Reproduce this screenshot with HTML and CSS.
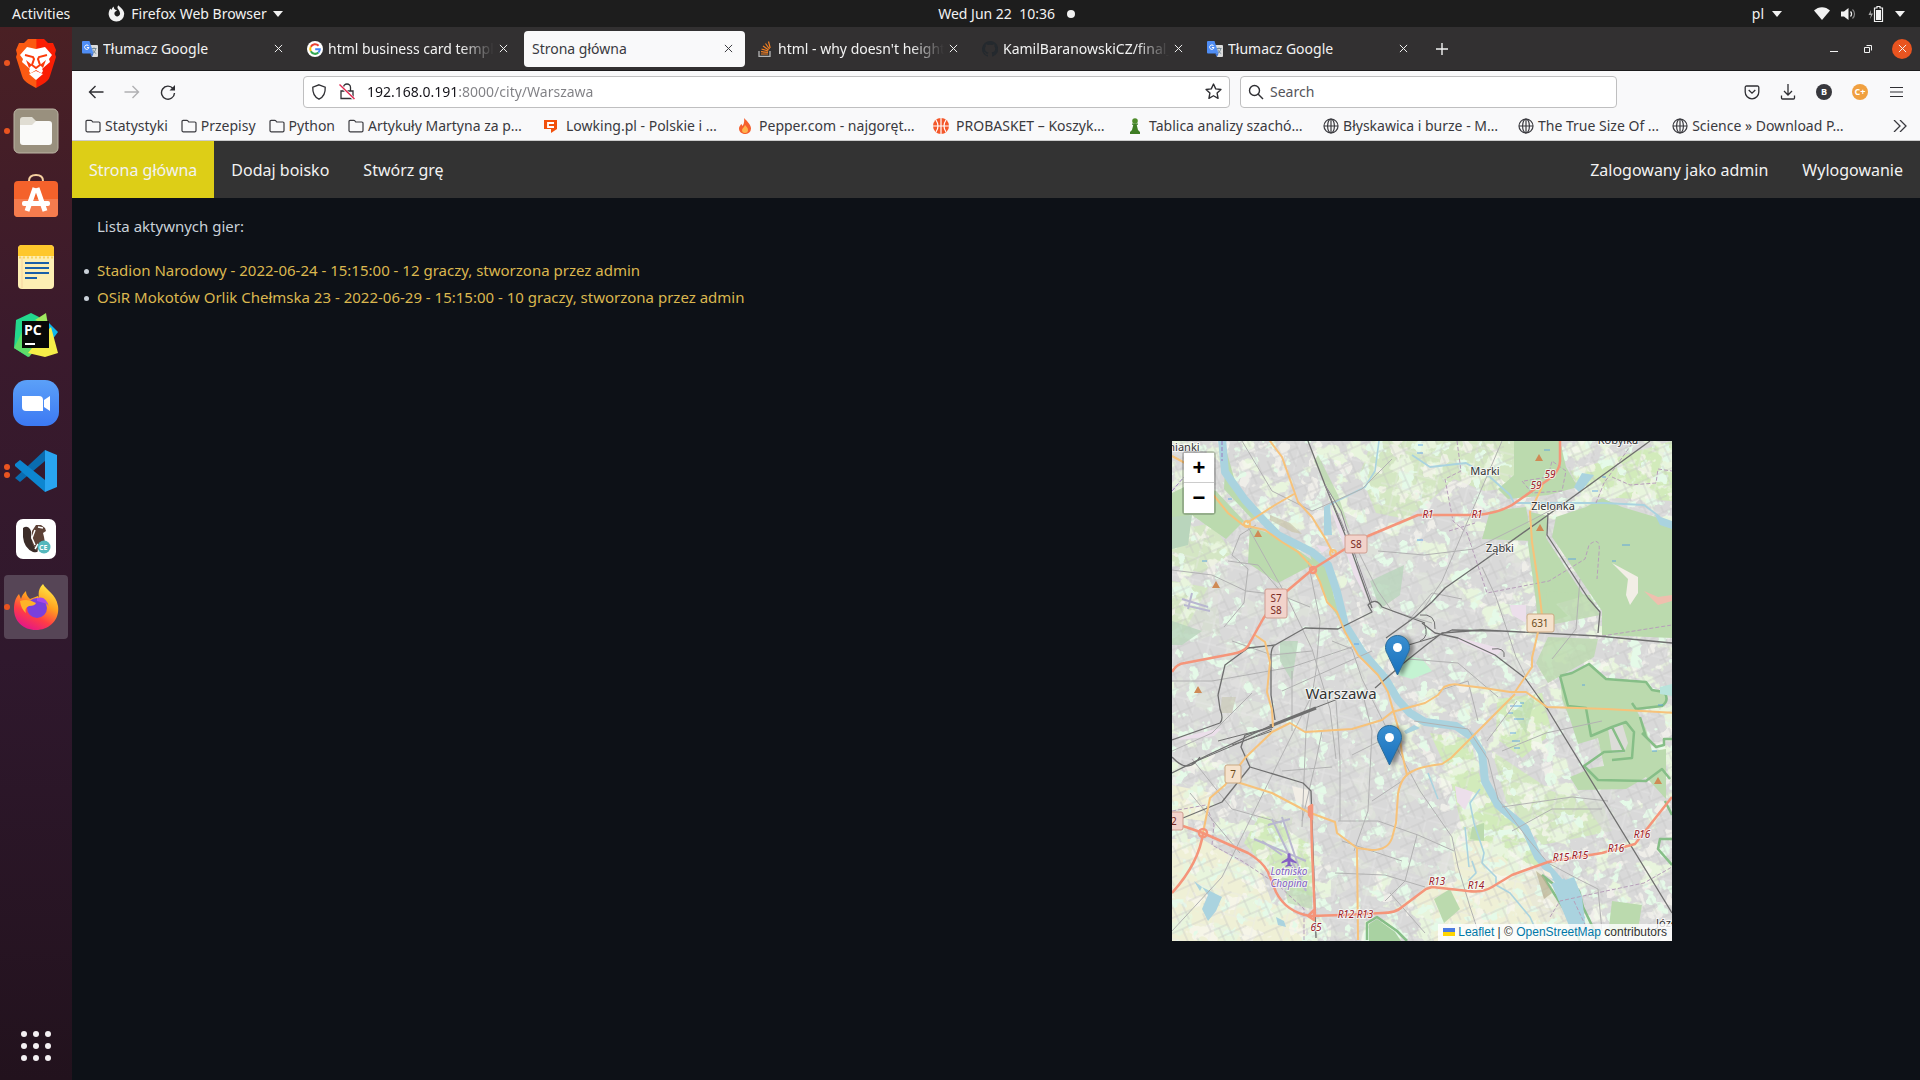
FILE: index.html
```html
<!DOCTYPE html>
<html lang="pl">
<head>
<meta charset="utf-8">
<meta name="viewport" content="width=device-width, initial-scale=1">
<title>Strona główna</title>
<link rel="stylesheet" href="styles.css">
</head>
<body>
<svg class="defs" width="0" height="0" aria-hidden="true">
  <symbol id="i-close" viewBox="0 0 10 10"><path d="M1 1l8 8M9 1L1 9" fill="none" stroke="currentColor" stroke-width="1.1"/></symbol>
  <symbol id="i-caret" viewBox="0 0 10 6"><path d="M0 0h10L5 6z" fill="currentColor"/></symbol>
  <symbol id="i-folder" viewBox="0 0 16 16"><path d="M1 12.500V3.500a1.200 1.200 0 0 1 1.200-1.200h3.600c.4 0 .7.1.9.4l1 1.300h6.100A1.200 1.200 0 0 1 15 5.200v7.300a1.300 1.300 0 0 1-1.300 1.300H2.300A1.300 1.300 0 0 1 1 12.500z" fill="none" stroke="currentColor" stroke-width="1.200"/></symbol>
  <symbol id="i-globe" viewBox="0 0 16 16"><g fill="none" stroke="currentColor" stroke-width="1.200"><circle cx="8" cy="8" r="7"/><ellipse cx="8" cy="8" rx="3.400" ry="7"/><path d="M1 8h14M8 1v14"/></g></symbol>
  <symbol id="i-translate" viewBox="0 0 16 16"><path d="M7 4h8a1 1 0 0 1 1 1v10a1 1 0 0 1-1 1h-5z" fill="#dcdcdc"/><path d="M9.500 7.500h5M12 6.500v1M10.500 12.500c2-1.200 3-3 3.200-5M10.800 8.500c.6 2 1.800 3.200 3.400 4" fill="none" stroke="#607988" stroke-width=".8"/><path d="M1 0h6.500l4 12.500H1a1 1 0 0 1-1-1V1a1 1 0 0 1 1-1z" fill="#4f8df5"/><path d="M8 12.500h3.500L10 16z" fill="#3a6fd0"/><path d="M6.700 5A2.200 2.200 0 1 0 7 6.500H4.900" fill="none" stroke="#fff" stroke-width="1"/></symbol>
  <symbol id="i-marker" viewBox="0 0 25 41"><path d="M12.500 .5C5.800 .5 .5 5.900 .5 12.500c0 2.500.8 4.600 2.200 7L12.500 40l9.800-20.500c1.400-2.400 2.200-4.500 2.200-7C24.500 5.900 19.200.5 12.500.5z" fill="url(#pin)" stroke="#2e6c97"/><circle cx="12.500" cy="12.500" r="4.500" fill="#fff"/></symbol>
  <linearGradient id="pin" x1="0" y1="0" x2="0" y2="1"><stop offset="0" stop-color="#3a8fd0"/><stop offset="1" stop-color="#1870bd"/></linearGradient>
</svg>

<header class="topbar">
  <div class="topbar-left">
    <button class="plain">Activities</button>
    <button class="plain app-menu">
      <svg width="17" height="17" viewBox="0 0 17 17"><path d="M8.500 16.500A7.700 7.700 0 0 1 1 6.500c.3-1.300.8-2.300 1.500-3l.7 1.500c.5-.9 1.200-2.500 2.600-3.500-.2 1.500.3 2.500 1.400 3.200l1.700.2c-.2 1.300-1.800 1.500-2.300 2.500-.8 2.500 1 4.200 2.800 4 2-.2 3-2 2.600-3.500C11.500 5.500 10 4.500 9.500 3c-.2-1 .2-2 1-2.800C11 2 15.800 3.500 16.200 8.500a7.700 7.700 0 0 1-7.700 8z" fill="#f2f2f2"/></svg>
      <span>Firefox Web Browser</span>
      <svg width="10" height="6"><use href="#i-caret"/></svg>
    </button>
  </div>
  <button class="plain clock"><time>Wed Jun 22&nbsp; 10:36</time><i class="clock-dot"></i></button>
  <div class="topbar-right">
    <button class="plain lang">pl <svg width="10" height="6"><use href="#i-caret"/></svg></button>
    <button class="plain status" aria-label="System">
      <svg width="16" height="13" viewBox="0 0 16 13"><path d="M0 3.500C4.500-1 11.500-1 16 3.500L8 13z" fill="#f2f2f2"/></svg>
      <svg width="16" height="14" viewBox="0 0 16 14"><path d="M0 4.500h3L7.500 1v12L3 9.500H0z" fill="#f2f2f2"/><path d="M9.500 4.500a3.500 3.500 0 0 1 0 5" fill="none" stroke="#f2f2f2" stroke-width="1.300"/><path d="M11.500 2.500a6 6 0 0 1 0 9" fill="none" stroke="#888" stroke-width="1.200"/></svg>
      <svg width="16" height="16" viewBox="0 0 16 16"><path d="M3 4L.5 9H3l-1 4 3-5.500H2.700z" fill="#aaa"/><path d="M9 .5h3v1.500h2.500v13.500h-8V2H9z" fill="none" stroke="#f2f2f2" stroke-width="1.200"/><path d="M8 4h5v10H8z" fill="#f2f2f2"/></svg>
      <svg width="10" height="6"><use href="#i-caret"/></svg>
    </button>
  </div>
</header>

<div class="desktop">
<nav class="dock" aria-label="Dock">
  <button class="dock-item running" aria-label="Brave"><svg width="42" height="50" viewBox="2 0 42 50"><defs><linearGradient id="br"><stop offset=".5" stop-color="#fb5a12"/><stop offset=".52" stop-color="#fa1e04"/></linearGradient></defs><path d="M15 1h16l4 4h5l3 7-1 4 1 3-6 19c-1 4-4 6-7 8l-7 4-7-4c-3-2-6-4-7-8L3 19l1-3-1-4 3-7h5z" fill="url(#br)"/><path d="M14 9l9 2 9-2 7 8-3 4 1 3-8 7c2 2 0 4-1 4l-5-3-5 3c-1 0-3-2-1-4l-8-7 1-3-3-4z" fill="#fff"/><path d="M12 17l8 2 1 2-2 6 4 3 4-3-2-6 1-2 8-2" fill="none" stroke="#fb3c0b" stroke-width="2"/><path d="M13 22l6 5-3 3zM33 22l-6 5 3 3z" fill="#fb3c0b"/><path d="M23 33l7 3-7 6-7-6z" fill="#fff"/></svg></button>
  <button class="dock-item running" aria-label="Files"><svg width="46" height="46" viewBox="0 0 46 46"><rect x="1" y="1" width="44" height="44" rx="5" fill="#99907e" stroke="#bcb5a5"/><path d="M7 12q0-3 3-3h9l4 4v6H7z" fill="#e0ddd3"/><path d="M7 17h12l4-4h13q3 0 3 3v18q0 3-3 3H10q-3 0-3-3z" fill="#fafaf9"/></svg></button>
  <button class="dock-item" aria-label="Software"><svg width="46" height="50" viewBox="0 2 46 50"><path d="M16 12V9q0-6 7-6t7 6v3" fill="none" stroke="#f5d0a0" stroke-width="2"/><rect x="1" y="9" width="44" height="36" rx="4" fill="#f4622b"/><path d="M1 27h44v14q0 4-4 4H5q-4 0-4-4z" fill="#f57c4e"/><path d="M22 16l-8 23M24 16l8 23" stroke="#fff" stroke-width="5" fill="none"/><rect x="9" y="29" width="28" height="5" rx="2" fill="#fff"/></svg></button>
  <button class="dock-item" aria-label="Notes"><svg width="46" height="46" viewBox="0 0 46 46"><rect x="5" y="1" width="36" height="44" rx="4" fill="#fdeeb3"/><path d="M5 12V5q0-4 4-4h28q4 0 4 4v7z" fill="#fec72c"/><path d="M6 13.500h35" stroke="#f9d35e" stroke-width="2" stroke-dasharray="2 2"/><path d="M9 13v31" stroke="#f6d3a0"/><path d="M12 19h24M12 24h24M12 29h24M12 34h12" stroke="#1a5fa8" stroke-width="2"/></svg></button>
  <button class="dock-item" aria-label="PyCharm"><svg width="46" height="46" viewBox="0 0 46 46"><path d="M3 8L18 1l8 4-2 30-9 10L1 36z" fill="#23d88d"/><path d="M22 8L33 1l2 12z" fill="#9fe85f"/><path d="M34 9l11 11-9 12z" fill="#0cb7ee"/><path d="M1 36l10-20 11 22-6 7z" fill="#5fdc68"/><path d="M38 15l7 26-13 4-17-4 8-10z" fill="#f5ee48"/><rect x="9" y="9" width="27" height="27" fill="#080808"/><path d="M12 32h10" stroke="#fff" stroke-width="2"/><text x="11" y="23" class="pc">PC</text></svg></button>
  <button class="dock-item" aria-label="Zoom"><svg width="46" height="46" viewBox="0 0 46 46"><defs><linearGradient id="zm" x2="0" y2="1"><stop stop-color="#5ba0f8"/><stop offset="1" stop-color="#3c79f3"/></linearGradient></defs><rect width="46" height="46" rx="14" fill="url(#zm)"/><path d="M9 16h17q4 0 4 4v11H13q-4 0-4-4z" fill="#fff"/><path d="M31 20l6-4v15l-6-4z" fill="#fff"/></svg></button>
  <button class="dock-item running-two" aria-label="Visual Studio Code"><svg width="44" height="44" viewBox="0 0 44 44"><path d="M1 29l30-28v11L6 33z" fill="#0a6cb0"/><path d="M1 15l5-4 25 20v12L1 17z" fill="#0d86d0"/><path d="M31 1l12 5v32l-12 5z" fill="#29a4f0"/></svg></button>
  <button class="dock-item" aria-label="DBeaver"><svg width="40" height="40" viewBox="0 0 40 40"><rect width="40" height="40" rx="7" fill="#fff"/><path d="M7 9q4-3 7 1 2 3 1 8l3 9 4 5q-1 2-5 1Q8 29 7 18z" fill="#3b2c28"/><path d="M16 12l4-6 5 0 4 3 1 3-3 2 1 4 1 6-5 2-3 6-5-8z" fill="#5c4136"/><path d="M19 11l-3 8 3 7M22 8l5 1M19 30l3-5" stroke="#fff" stroke-width="1.500" fill="none"/><circle cx="28" cy="28" r="6.500" fill="#55b8bd"/><text x="23" y="31" class="ce">CE</text></svg></button>
  <button class="dock-item running active" aria-label="Firefox"><svg width="46" height="48" viewBox="0 0 46 48"><defs><linearGradient id="ff" x1=".8" y1="0" x2=".3" y2="1"><stop stop-color="#fff04a"/><stop offset=".4" stop-color="#ffa01f"/><stop offset=".7" stop-color="#ff3d45"/><stop offset="1" stop-color="#e2148c"/></linearGradient></defs><path d="M23 47C10 47 1 38 1 26c0-7 2-12 5-15l2 5c1-4 3-6 5-8 0 3 1 5 4 8l8-3 1 2c-1-6 0-10 4-14 3 6 13 10 15 22 2 14-9 24-22 24z" fill="url(#ff)"/><circle cx="24" cy="25" r="10" fill="#7a40dc"/><path d="M24 15q9-3 12 9-2-4-5-4l-7-2z" fill="#a848e8"/><path d="M7 18q8-3 16 2-1 3-7 3-5 2-3 7-5-4-6-12z" fill="#ffb328"/></svg></button>
  <button class="dock-item apps" aria-label="Show Applications"><svg width="32" height="32" viewBox="0 0 32 32" fill="#f4f0f3"><circle cx="4" cy="4" r="3"/><circle cx="16" cy="4" r="3"/><circle cx="28" cy="4" r="3"/><circle cx="4" cy="16" r="3"/><circle cx="16" cy="16" r="3"/><circle cx="28" cy="16" r="3"/><circle cx="4" cy="28" r="3"/><circle cx="16" cy="28" r="3"/><circle cx="28" cy="28" r="3"/></svg></button>
</nav>

<div class="browser">
  <div class="tabs">
    <div class="tab"><svg width="16" height="16"><use href="#i-translate"/></svg><span class="tab-label">Tłumacz Google</span><button class="plain tab-x" aria-label="Close"><svg width="9" height="9"><use href="#i-close"/></svg></button></div>
    <div class="tab"><svg width="16" height="16" viewBox="0 0 16 16"><circle cx="8" cy="8" r="8" fill="#fff"/><g fill="none" stroke-width="2"><path d="M11.600 4.700A4.800 4.800 0 0 0 3.800 5.800" stroke="#ea4335"/><path d="M3.800 5.800a4.800 4.800 0 0 0 0 4.500" stroke="#fbbc05"/><path d="M3.800 10.300a4.800 4.800 0 0 0 7.600 1.200" stroke="#34a853"/><path d="M11.400 11.500A4.800 4.800 0 0 0 12.800 8.200H8.200" stroke="#4285f4"/></g></svg><span class="tab-label fade">html business card templ</span><button class="plain tab-x" aria-label="Close"><svg width="9" height="9"><use href="#i-close"/></svg></button></div>
    <div class="tab selected"><span class="tab-label">Strona główna</span><button class="plain tab-x" aria-label="Close"><svg width="9" height="9"><use href="#i-close"/></svg></button></div>
    <div class="tab"><svg width="16" height="16" viewBox="-1 0 16 16"><path d="M1 10v5.300h11V10" fill="none" stroke="#b4b4b4" stroke-width="1.300"/><path d="M3 13h7M3 10.700l7 .6M3.500 8l6.600 2M5 5l5.600 4M7.500 2.500l4 5.500M10.500.5l1.700 6.500" stroke="#f48024" stroke-width="1.200"/></svg><span class="tab-label fade">html - why doesn't height</span><button class="plain tab-x" aria-label="Close"><svg width="9" height="9"><use href="#i-close"/></svg></button></div>
    <div class="tab"><svg width="16" height="16" viewBox="0 0 16 16"><path fill="#24292e" d="M8 0a8 8 0 0 0-2.500 15.600c.4 0 .5-.2.500-.4v-1.500c-2 .5-2.600-.5-2.800-1-.1-.2-.5-.9-.8-1.100-.3-.1-.7-.5 0-.5s1.100.6 1.200.8c.8 1.200 1.900.9 2.400.7.100-.5.300-.9.500-1.100C4.700 11.300 3 10.600 3 7.600c0-.9.300-1.600.8-2.200-.1-.2-.4-1 .1-2.100 0 0 .7-.2 2.200.8a7.700 7.700 0 0 1 4 0c1.500-1 2.200-.8 2.200-.8.400 1.100.2 1.900.1 2.100.5.600.8 1.300.8 2.200 0 3-1.800 3.700-3.600 3.900.3.300.5.700.5 1.500v2.200c0 .2.200.5.600.4A8 8 0 0 0 8 0z"/></svg><span class="tab-label fade">KamilBaranowskiCZ/final_</span><button class="plain tab-x" aria-label="Close"><svg width="9" height="9"><use href="#i-close"/></svg></button></div>
    <div class="tab"><svg width="16" height="16"><use href="#i-translate"/></svg><span class="tab-label">Tłumacz Google</span><button class="plain tab-x" aria-label="Close"><svg width="9" height="9"><use href="#i-close"/></svg></button></div>
    <button class="plain new-tab" aria-label="New tab"><svg width="12" height="12" viewBox="0 0 12 12"><path d="M6 0v12M0 6h12" stroke="currentColor" stroke-width="1.400"/></svg></button>
    <div class="window-buttons">
      <button class="plain" aria-label="Minimize"><svg width="10" height="10" viewBox="0 0 10 10"><path d="M1 7.500h8" stroke="currentColor"/></svg></button>
      <button class="plain" aria-label="Restore"><svg width="10" height="10" viewBox="0 0 10 10"><path d="M1.500 3.500h5v5h-5zM3.500 1.500h5v5" fill="none" stroke="currentColor"/></svg></button>
      <button class="plain close" aria-label="Close window"><svg width="9" height="9"><use href="#i-close"/></svg></button>
    </div>
  </div>

  <div class="toolbar">
    <button class="plain tool" aria-label="Back"><svg width="16" height="16" viewBox="0 0 16 16"><path d="M15.500 8H1.500M7.500 2l-6 6 6 6" fill="none" stroke="currentColor" stroke-width="1.400"/></svg></button>
    <button class="plain tool dim" aria-label="Forward"><svg width="16" height="16" viewBox="0 0 16 16"><path d="M.5 8h14M8.500 2l6 6-6 6" fill="none" stroke="currentColor" stroke-width="1.400"/></svg></button>
    <button class="plain tool" aria-label="Reload"><svg width="16" height="16" viewBox="0 0 16 16"><path d="M13 4.500A6.500 6.500 0 1 0 14.500 9" fill="none" stroke="currentColor" stroke-width="1.400"/><path d="M15 1v5.500H9.500z" fill="currentColor"/></svg></button>
    <span class="spring"></span>
    <form class="field url">
      <svg width="16" height="16" viewBox="0 0 16 16"><path d="M8 .8l6.200 2.400c.3 5.200-1.300 9.600-6.200 12C3.100 12.800 1.500 8.400 1.800 3.200z" fill="none" stroke="currentColor" stroke-width="1.300"/></svg>
      <svg width="16" height="17" viewBox="0 0 16 17"><path d="M2 8h12v7.500H2zM4.500 8V4.500a3.500 3.500 0 0 1 7 0V8" fill="none" stroke="currentColor" stroke-width="1.300"/><path d="M1 2l14 14" stroke="#fff" stroke-width="3"/><path d="M.5 1.500l15 14.500" stroke="#e22850" stroke-width="1.400"/></svg>
      <input type="text" class="address" aria-label="Address" value="192.168.0.191:8000/city/Warszawa">
      <svg width="17" height="17" viewBox="0 0 16 16"><path d="M8 1l2.100 4.500 4.900.6-3.600 3.400.9 4.900L8 12l-4.300 2.400.9-4.900L1 6.100l4.900-.6z" fill="none" stroke="currentColor" stroke-width="1.300" stroke-linejoin="round"/></svg>
    </form>
    <form class="field search">
      <svg width="16" height="16" viewBox="0 0 16 16"><circle cx="6.500" cy="6.500" r="5" fill="none" stroke="currentColor" stroke-width="1.400"/><path d="M10 10l5 5" stroke="currentColor" stroke-width="1.400"/></svg>
      <input type="text" aria-label="Search" placeholder="Search">
    </form>
    <span class="spring"></span>
    <button class="plain tool" aria-label="Pocket"><svg width="16" height="16" viewBox="0 0 16 16"><path d="M2.500 2h11a1.300 1.300 0 0 1 1.300 1.300V8A6.800 6.800 0 0 1 1.200 8V3.300A1.300 1.300 0 0 1 2.500 2zM4.700 6L8 9.200 11.300 6" fill="none" stroke="currentColor" stroke-width="1.300"/></svg></button>
    <button class="plain tool" aria-label="Downloads"><svg width="16" height="16" viewBox="0 0 16 16"><path d="M8 0v11M4 7l4 4 4-4M1.500 11.500V14a1 1 0 0 0 1 1h11a1 1 0 0 0 1-1v-2.500" fill="none" stroke="currentColor" stroke-width="1.300"/></svg></button>
    <button class="plain tool" aria-label="Extension B"><span class="ext ext-b">B</span></button>
    <button class="plain tool" aria-label="Extension C"><span class="ext ext-c">C+</span></button>
    <button class="plain tool" aria-label="Menu"><svg width="13" height="12" viewBox="0 0 13 12"><path d="M0 1.500h13M0 6h13M0 10.500h13" stroke="currentColor" stroke-width="1.200"/></svg></button>
  </div>

  <div class="bookmarks">
    <a href="#"><svg width="16" height="16"><use href="#i-folder"/></svg>Statystyki</a>
    <a href="#"><svg width="16" height="16"><use href="#i-folder"/></svg>Przepisy</a>
    <a href="#"><svg width="16" height="16"><use href="#i-folder"/></svg>Python</a>
    <a href="#" class="wide"><svg width="16" height="16"><use href="#i-folder"/></svg>Artykuły Martyna za p…</a>
    <a href="#" class="wide site"><svg width="16" height="16" viewBox="-1 0 16 16"><path d="M0 2h13v9l-6 4v-4H0z" fill="#f2500c"/><path d="M10 5H4v4h6" fill="none" stroke="#fff" stroke-width="1.800"/></svg>Lowking.pl - Polskie i …</a>
    <a href="#" class="wide site"><svg width="14" height="16" viewBox="0 0 14 16"><path d="M6 0c4 4 7 7 7 10.500A5.500 5.500 0 0 1 7.200 16C3.500 16 1 13.500 1 10.500 1 8.500 2.500 7 3.500 6l1 2C6 6 6.500 3 6 0z" fill="#f5602f"/><path d="M7 7c2 2 3 3.500 3 5a3 3 0 0 1-6 0c0-1.500 2-2.500 3-5z" fill="#ffb24c"/></svg>Pepper.com - najgoręt…</a>
    <a href="#" class="wide site"><svg width="16" height="16" viewBox="0 0 16 16"><circle cx="8" cy="8" r="8" fill="#f4572a"/><path d="M8 0v16M0 8h16M3 2q4 6 0 12M13 2q-4 6 0 12" fill="none" stroke="#fff" stroke-width="1.200"/></svg>PROBASKET – Koszyk…</a>
    <a href="#" class="wide site"><svg width="14" height="16" viewBox="0 0 14 16"><circle cx="7" cy="3" r="2.800" fill="#4f8c2c"/><path d="M4 5.500h6v1.200H8.700L10 12l2 2v2H2v-2l2-2 1.300-5.300H4z" fill="#3f7d24"/></svg>Tablica analizy szachó…</a>
    <a href="#" class="wide"><svg width="16" height="16"><use href="#i-globe"/></svg>Błyskawica i burze - M…</a>
    <a href="#"><svg width="16" height="16"><use href="#i-globe"/></svg>The True Size Of ...</a>
    <a href="#" class="wide"><svg width="16" height="16"><use href="#i-globe"/></svg>Science » Download P…</a>
    <button class="plain more" aria-label="More bookmarks"><svg width="14" height="12" viewBox="0 0 14 12"><path d="M1 0l6 6-6 6M7 0l6 6-6 6" fill="none" stroke="currentColor" stroke-width="1.300"/></svg></button>
  </div>

  <nav class="site-nav">
    <a href="#" class="current">Strona główna</a>
    <a href="#">Dodaj boisko</a>
    <a href="#">Stwórz grę</a>
    <a href="#" class="push">Zalogowany jako admin</a>
    <a href="#">Wylogowanie</a>
  </nav>

  <main class="page">
    <p class="intro">Lista aktywnych gier:</p>
    <ul class="games">
      <li><a href="#">Stadion Narodowy - 2022-06-24 - 15:15:00 - 12 graczy, stworzona przez admin</a></li>
      <li><a href="#">OSiR Mokotów Orlik Chełmska 23 - 2022-06-29 - 15:15:00 - 10 graczy, stworzona przez admin</a></li>
    </ul>
    <section class="map" aria-label="Mapa">
      <svg class="tiles" viewBox="0 0 500 500">
        <defs>
          <pattern id="streets" width="43" height="37" patternUnits="userSpaceOnUse" patternTransform="rotate(-24)"><path d="M0 6h43M0 20h26M12 29h31M8 0v20M26 6v31M36 20v17M17 20v17M33 0v6" fill="none" stroke="#c2c2c2" stroke-width=".6"/></pattern>
          <pattern id="lanes" width="71" height="59" patternUnits="userSpaceOnUse" patternTransform="rotate(14)"><path d="M0 11h71M14 0v59M14 33h40M54 11v48M33 11v22M0 49h54" fill="none" stroke="#e9e9e9" stroke-width=".6"/></pattern>
          <filter id="grass" x="0" y="0" width="1" height="1"><feTurbulence type="fractalNoise" baseFrequency=".045 .05" numOctaves="4" seed="7"/><feColorMatrix values="0 0 0 0 .81  0 0 0 0 .91  0 0 0 0 .72  14 0 0 0 -7.700"/></filter>
          <filter id="parks" x="0" y="0" width="1" height="1"><feTurbulence type="fractalNoise" baseFrequency=".07" numOctaves="3" seed="21"/><feColorMatrix values="0 0 0 0 .78  0 0 0 0 .96  0 0 0 0 .81  0 18 0 0 -11.200"/></filter>
          <filter id="fields" x="0" y="0" width="1" height="1"><feTurbulence type="fractalNoise" baseFrequency=".06" numOctaves="3" seed="3"/><feColorMatrix values="0 0 0 0 .95  0 0 0 0 .94  0 0 0 0 .88  0 0 18 0 -11"/></filter>
        </defs>
        <rect width="500" height="500" fill="#d9d9d9"/>
        <g fill="#d2ebbb">
          <path d="M200 0h170l-8 45-50 5-30-12-20 18-28 22-30-6-16-40z" opacity=".75"/>
          <path d="M398 30l102-30v60l-90-5z"/>
          <path d="M0 140l45 8 3 45-48 10zM0 90l40-8 20 30-30 20-30-8z" opacity=".7"/>
          <path d="M258 292l40 6 12 46 18 28 30 20 14 30-30 10-50-36-14-60z"/>
          <path d="M320 310l60 40 50 10 10 30-70 14-36-44z" opacity=".8"/>
          <path d="M90 370l30 6 22 30v50l-30-10-40-44z"/>
          <path d="M325 258l45-6 10 40-30 25-26-20z"/>
        </g>
        <g fill="#eff0d6">
          <path d="M0 398l30 0 60 36 10 28 34 16v22H0z"/>
          <path d="M285 400l30 0 30 30 32 70H262l-20-40z"/>
          <path d="M340 420l30 10 40 70h-60z" opacity=".7"/>
          <path d="M0 344l40 8-8 28-32-4z"/>
        </g>
        <rect width="500" height="500" filter="url(#grass)"/>
        <rect width="500" height="500" filter="url(#fields)" opacity=".7"/>
        <path d="M50 120l60-8 44 30 30 60 50 66-24 16 20 60-8 60-30 20-60-24-60-40-20-50-50-20v-80zM170 70l60 30 60 50 30 50 60 40-30 14-110-20-50-60zM270 90l50 0 30 30 0 20-40 10-30-20zM235 320l40 60 10 60-40 10-40-20-16 70 -30 0 0-80zM380 160l46 30-50-4zM376 256l40 10 26 60 40 60-40 20-40-60z" fill="#d9d9d9" opacity=".7"/>
        <rect width="500" height="500" filter="url(#parks)"/>
        <rect width="500" height="500" fill="url(#lanes)"/>
        <rect width="500" height="500" fill="url(#streets)"/>
        <g fill="#bbdaae">
          <path d="M384 76l30-10 16-9 20 9 50 15v116l-70-3v-24l-50-74z"/>
          <path d="M358 71l18 4-2 22 38 58-28 8 12 12-30 10-2-24-8-58z"/>
          <path d="M342 0h46l6 26 12 20-30 8-40 4-10-10 16-14z"/>
          <path d="M318 70l36-4 6 34-50-2z"/>
          <path d="M0 52l20-10 24 8 28 30-18 18-20-14-14-10-20 6z"/>
          <path d="M78 86l30 10 36 26-38 20-30-20z"/>
          <path d="M138 114l18 12 6 30 12 34-12-20-12-20z"/>
          <path d="M54 8l10 36 26 30-10 4-28-30z"/>
          <path d="M374 150l44 4 10 20-50 10zM376 196l50 2-4 18-46 26-12-20z" opacity=".8"/>
          <path d="M146 14l20 40 12 36-16-30-20-40z" opacity=".8"/>
          <path d="M108 200l18 0-6 40-12-20zM0 180l30 10-20 14-10 0zM198 140l34-16-4 30-20 14z" fill="#b9d5bc" opacity=".8"/>
          <path d="M262 458l16-10 10 20-16 14zM300 386l12-4v18l-14-2zM440 460l30 4-4 24-30 6z"/>
          <path d="M340 272l24-20-10 40z" opacity=".6"/>
          <path d="M110 436l30 10v22l-24-6z" opacity=".6"/>
          <path d="M0 76l20-2-4 30-16 4z" fill="#b9d5bc"/>
        </g>
        <path d="M230 214l20 4 10 12-20 8-14-4z" fill="#c4f3d2"/>
        <path d="M388 235l12-3 17-9 17 15 40 3 6 8 12 2q6 8-2 14l-26 3-4-10 2 6 12 24 6 22 14-2v50l-20-22-20 12-48 1-8-13 22-9 12-2-6-28-20 6-8-25-8-20z" fill="#bbdaae"/>
        <path d="M436 288l14-6 6 20-4 10-12 0z" fill="#dcdcd8"/>
        <g fill="none" stroke="#86be87" stroke-width="2.500" stroke-linejoin="round">
          <path d="M388 235l12-3 17-9 17 15 40 3 6 8 12 2q6 8-2 14l-26 3-4-6M388 235l8 30 18 2 5 28 21-9 14-5 8 10-2 26-20 2M440 286l12 24-20 1-20 14 14 14 48 1 16-12 8 10M470 292l14 14 8-2v-6l8 0M468 276l6 20M493 360l7 14M500 398l-12 0-2 10 14 16M195 499v-17l10-6 20 14 10 10M370 434l15 12 14-5 8 9 4 16 16 33M370 434l26 40 12 26"/>
        </g>
        <path d="M197 483l8-5 18 13 6 9h-32z" fill="#a9d2a2"/>
        <g opacity=".7"><path d="M98 74l20 8 12 11-10-2-22-12z" fill="#c9c4a9"/><path d="M364 430l8 6 8 16-8 6z" fill="#b9b191"/><path d="M50 256h14l-4 16H48z" fill="#cccbb9"/></g>
        <g fill="#ecdfeb">
          <path d="M283 345l18 6-8 18-8-8zM338 164h16v18l-14-8zM285 196l46 12-8 8-36-16zM10 296l40-9-8 8-36 4zM156 60l16 30 24 70-14-26zM144 104l14 2-8 6z"/>
        </g>
        <path d="M440 122l26 14 0 16-8 12-4-10 2-16zM120 345l16 4 2 18-14-6z" fill="#f2eee6"/>
        <path d="M472 150l14 6 14-2v6l-14 4z" fill="#efbfae"/>
        <g fill="#aad3df">
          <path d="M402 46l8-14 12 2-14 18zM483 74l17 6v8l-12-4zM30 446l20 10-6 14-8 10-6-12 6-14zM22 440l8 6-2 4zM104 476l8 4 2 6-8-2zM232 290l10-6 6 3-14 6zM152 66l6-2 2 30-8 0z"/>
          <path d="M384 442l18-6 8 20 4 34-10-4z"/>
          <path d="M488 246l12-3v12l-12-2z" fill="#b9e4dc"/>
        </g>
        <g fill="none" stroke="#aad3df" stroke-linejoin="round">
          <path d="M50-2L53 31 73 59 93 81 106 94 140 111 156 124 165 151 173 184 190 211 213 237 226 259 238 272 253 281 284 285 300 296 310 312 313 340 326 364 353 387 366 416 386 439 410 479" stroke-width="8"/>
          <path d="M386 440l20 48" stroke-width="14"/>
          <path d="M240 14l18 12 36-4 24 14 20 18 4 8h90l40 2 16 12" stroke-width="1.800"/>
          <path d="M207 0l-4 30-10 16-40 20M308 348l-10 14 4 20 10 30-2 10 14 14 0 8 14 8 20 24 10 22M293 386l4 40M300 420l4 12-8 8M256 332l10 26" stroke-width="1.600"/>
        </g>
        <path d="M370 428l8 4 3 6-8-4z" fill="#f5efdf"/>
        <g stroke="#4d9bea" stroke-width=".8"><path d="M245 12h6M246 4h5M396 118h8M450 104h8M440 120h4M338 265h12M342 278h10M338 292h6M340 300h8M342 307h6M336 272h5M348 262h4M56 58h4M182 203h5M410 244h3M480 310h5M486 264h5M372 9h6M430 36h4M245 99h6M30 120h5M420 50h6"/></g>
        <g fill="none" stroke-width="1" stroke-dasharray="4 2" stroke="#b79fba">
          <path d="M285 0l4 30-16 8 8 42 14 12 20 60 62-12 36-22 4-14q12-10 10 8l-2 26M277 90l26-8M352 40l24-4 4-16 14 10-4 20-30 2-10-12M424 62l8-20 30-42M440 36l18 8 26-2 2-14 14 2M424 196l76-12M0 370l34-6 8 20-2 20 30 16 36 24 26 24v31M378 476l10-16 46-10 38-8 28-16M402 460l14 30"/>
          <path d="M0 50l12-14M50 0v20" stroke="#9b7bc0"/>
        </g>
        <g fill="none" stroke="#b2b2b2" stroke-width="1" stroke-linejoin="round">
          <path d="M0 129l40 5 34 16 34 4 30 12M76 86l40 72 24 50 18 60 6 50M84 84l-16 10-8 20 16 14-4 34-20 24M56 120l30 4 24 28M136 120l12 60-4 50-10 60-4 96M18 352l50 60M0 490l50-54 54-110 40-80M160 200l20 8 10 30 30 60 28 52 32 46 6 30 12 40 14 42M190 250l10 40-4 80-14 40M164 260l4 60 0 60M166 380l40 0 40 14 36 16M242 280l54 8 20 30 10 40 30 40 20 24 30 16 20 10 4 42M330 0l-60 140-20 30M176 90l30 60 14 20 40 12M206 110l46 4 50-6 60-30 30-16M310 126l14 30 20 60 10 20M236 218l50 4 40 34M266 250l30-10 10 40M236 180l24-28 30 6M380 218l24-30 4-50M315 300l30-40M330 310l44-18 56-12M330 366l70-10 36 4M340 390l40-22 50 0M163 432l50 2 40 12M218 452l35 40M213 460l20-20 12-46M0 240h40l80-14 60-20M0 310l40-18 40-40M20 318l40 50 50 14M110 250l90-40M150 290l-6 30-14 60M140 70l50-22 30-30M180 314l40-20M60 200l40 14 40-4M120 230l0 60M70 0l30 50 40 20M200 360l30-20M110 330l50-4M170 400l60 20"/>
        </g>
        <g fill="none" stroke="#b9b7d0" stroke-width="2">
          <path d="M96 384l22-6M100 378l34 72M82 398l52 22M110 376l20 60M90 400l20 14M10 158l26 8M12 164l26 6M20 152l-4 16"/>
        </g>
        <g fill="none" stroke="#6f6f6f" stroke-width="1.300" stroke-linejoin="round">
          <path d="M136 0L153 44 180 111 200 167"/>
          <path d="M153 44l16 26 16 50 15 42M153 44l20 46" stroke="#8d8790" stroke-width="1"/>
          <path d="M46 254L53 224 76 207 103 204 133 187 166 188 200 171 196 164q8-8 14 2l43 16M103 204q-4 2-4 12l0 38 4 25M101 286l-28 8-4 12 9 20 53 16 8 8 5 147"/>
          <path d="M0 332l36-18 64-30M0 299l48-17q4-4 0-14l-2-14M0 316q16 18 28 0M11 377l39-16 28-35"/>
          <path d="M203 247l30-26 20-16 17-13 40-3 116 6 74 7M233 205l27-8 20-8 46 1M214 197l29-21 17-15 13-14 30-21 73-52L478 0M376 72l-1 22 41 63 12 14-2 21M250 182l13 10 23 5 37 17 30 23 12 17 11 15 124 203"/>
          <path d="M248 174q16-2 15 14M252 182q6 14-4 18M320 208q14-2 12 8" stroke-width="1"/>
          <path d="M98 285l46-18" stroke-width="3"/>
          <path d="M46 300l54-14M60 304l40-14M20 322l80-34M140 268l26-10" stroke-width="1"/>
        </g>
        <g fill="none" stroke="#f7c27a" stroke-width="2" stroke-linejoin="round">
          <path d="M98 0l12 16 11 31 5 14 14 15 13 21 8 15M0 15l13 7 30 34 13 16 15 12 22 5 17 12 16 10 15 16 7 14 7 20 10 10 8 20 13 23 20 20 10 17 5 18 5 17 4 26 5 22M75 82l28-18 19-11"/>
          <path d="M83 194l10 7 5 20-3 30 5 18 1 17M31 392l7-35 15-13 20-27 27-26 18-9 15 9 47-3 30-9 10-8 33-9 13-8 6-8q8-4 16-2l24 3 26 4h16l21 15 60 2 70 4"/>
          <path d="M65 341l35 11 36 19 27 10 2 11 20 15 15 2q16 0 20-12l4-15 2-29q3-18 15-23 6-4 29-7l9-6 14-14 17-17 33-33M185 407l1 92M371 44l-13 27 2 30 6 40 4 33-4 17-6 26v9l-17 25"/>
          <circle cx="75" cy="83" r="3"/><circle cx="161" cy="112" r="3"/>
        </g>
        <g fill="none" stroke="#f5957a" stroke-width="2.500" stroke-linejoin="round">
          <path d="M0 231q4-8 13-9l47-9q12-2 16-8l15-27 12-18 12-10 26-22 32-20 23-13 50-21 60 0q20-2 34-10l20-14 20-14q8-8 8-16V0"/>
          <path d="M11 385l20 7 45 20q14 8 20 19l8 20q10 20 34 24l32-1 40-2q14 0 20-6l24-18 6-2 36 4q14 2 24-4l20-12 36-13 54-9 33-9 37-47M31 392q-4 30-31 60M139 366l1 43 3 67"/>
          <circle cx="31" cy="392" r="4"/><circle cx="141" cy="129" r="3"/><path d="M136 475l6-6v10zM137 366l3-2 0 14-3-4z"/>
        </g>
        <g fill="#cf8a55"><path d="M86 89l4 7h-8zM44 140l4 7h-8zM26 245l4 7h-8zM367 13l4 7h-8zM368 83l4 7h-8zM486 336l4 7h-8z"/></g>
        <path d="M117 412l1.500 1v4l6 4v1.500l-6-2v3l2 1.500v1l-3.500-1-3.500 1v-1l2-1.500v-3l-6 2V421l6-4v-4z" fill="#8461c4"/>
        <g class="shields">
          <g fill="#f2d3cb" stroke="#cf9e92"><rect x="173" y="94" width="22" height="18" rx="2"/><rect x="93" y="148" width="22" height="29" rx="2"/><rect x="-10" y="371" width="21" height="18" rx="2"/></g>
          <g fill="#f5e2cc" stroke="#cba982"><rect x="355" y="173" width="27" height="18" rx="2"/><rect x="53" y="324" width="16" height="18" rx="2"/></g>
          <text x="184" y="107">S8</text><text x="104" y="161">S7</text><text x="104" y="173">S8</text><text x="-1" y="384">S2</text><text x="368" y="186" class="brown">631</text><text x="61" y="337" class="brown">7</text>
        </g>
        <g class="towns"><text x="4" y="10">Łomianki</text><text x="313" y="34">Marki</text><text x="381" y="69">Zielonka</text><text x="328" y="111">Ząbki</text><text x="446" y="3">Kobyłka</text><text x="504" y="486">Józefów</text><text x="169" y="258" class="city">Warszawa</text></g>
        <g class="routes"><text x="256" y="77">R1</text><text x="305" y="77">R1</text><text x="364" y="48">59</text><text x="378" y="37">59</text><text x="174" y="477">R12</text><text x="193" y="477">R13</text><text x="144" y="490">65</text><text x="265" y="444">R13</text><text x="304" y="448">R14</text><text x="389" y="420">R15</text><text x="408" y="418">R15</text><text x="444" y="411">R16</text><text x="470" y="397">R16</text></g>
        <g class="airport"><text x="117" y="434">Lotnisko</text><text x="117" y="446">Chopina</text></g>
      </svg>
      <button class="pin pin-narodowy" aria-label="Stadion Narodowy"><svg width="25" height="41"><use href="#i-marker"/></svg></button>
      <button class="pin pin-orlik" aria-label="OSiR Mokotów Orlik"><svg width="25" height="41"><use href="#i-marker"/></svg></button>
      <div class="zoom"><button aria-label="Zoom in">+</button><button aria-label="Zoom out">−</button></div>
      <div class="attribution"><svg width="12" height="8"><path fill="#4c7be1" d="M0 0h12v4H0z"/><path fill="#ffd500" d="M0 4h12v4H0z"/></svg> <a href="#">Leaflet</a> | © <a href="#">OpenStreetMap</a> contributors</div>
    </section>
  </main>
</div>
</div>
</body>
</html>
```
FILE: styles.css
```css
* { box-sizing: border-box; }

body {
  margin: 0;
  min-height: 100vh;
  display: flex;
  flex-direction: column;
  font: 14px/20px "Noto Sans", sans-serif;
  background: #0d1117;
  color: #f2f2f2;
}

.defs { position: absolute; }
svg { display: block; flex: none; }
a { color: inherit; text-decoration: none; }

.plain {
  display: flex;
  align-items: center;
  justify-content: center;
  padding: 0;
  border: 0;
  background: none;
  color: inherit;
  font: inherit;
}

/* System bar */
.topbar {
  display: grid;
  grid-template-columns: 937fr auto 844fr;
  align-items: center;
  height: 27px;
  background: #1d1d1d;
}
.topbar-left { display: flex; gap: 38px; padding-left: 12px; }
.app-menu { gap: 6px; }
.clock { gap: 12px; }
.clock-dot { width: 8px; height: 8px; border-radius: 50%; background: #f2f2f2; }
.topbar-right { display: flex; justify-content: flex-end; gap: 32px; padding-right: 15px; }
.lang { gap: 8px; }
.status { gap: 11px; }

/* Dock */
.desktop { flex: 1; display: flex; }
.dock {
  flex: none;
  display: flex;
  flex-direction: column;
  gap: 4px;
  width: 72px;
  padding: 4px 4px 2px;
  background: linear-gradient(#4a2024, #3a1a2c 30%, #2f182d 60%, #22121d);
}
.dock-item {
  position: relative;
  display: flex;
  align-items: center;
  justify-content: center;
  width: 64px;
  height: 64px;
  padding: 0;
  border: 0;
  border-radius: 4px;
  background: none;
}
.dock-item.active { background: #564556; }
.dock-item.apps { margin-top: auto; }
.running::before,
.running-two::before,
.running-two::after {
  content: "";
  position: absolute;
  left: 0;
  top: 29px;
  width: 6px;
  height: 6px;
  border-radius: 50%;
  background: #e95420;
}
.running-two::before { top: 25px; }
.running-two::after { top: 33px; }
.pc { font: bold 14px "Open Sans", sans-serif; fill: #fff; }
.ce { font: bold 7px "Open Sans", sans-serif; fill: #fff; }

/* Browser chrome */
.browser { flex: 1; min-width: 0; display: flex; flex-direction: column; }
.tabs {
  display: flex;
  align-items: center;
  gap: 4px;
  height: 44px;
  padding: 0 8px 0 2px;
  background: #323031;
  border-bottom: 1px solid #1c1b1c;
}
.tab {
  flex: 0 1 221px;
  min-width: 0;
  display: flex;
  align-items: center;
  gap: 5px;
  height: 36px;
  padding: 0 12px 0 8px;
  border-radius: 4px;
}
.tab.selected { background: #f9f9fa; color: #3a3a3f; }
.tab-label { flex: 1; min-width: 0; overflow: hidden; white-space: nowrap; }
.tab-label.fade { mask-image: linear-gradient(90deg, #000 80%, transparent); }
.new-tab { width: 32px; height: 32px; margin-left: 2px; }
.window-buttons { display: flex; gap: 14px; margin-left: auto; }
.window-buttons .plain { width: 20px; height: 20px; }
.window-buttons .close { border-radius: 50%; background: #e95420; }

.toolbar {
  display: flex;
  align-items: center;
  gap: 4px;
  height: 41px;
  padding: 0 8px;
  background: #f9f9fa;
  color: #2f2f33;
}
.tool { flex: none; width: 32px; height: 32px; }
.tool.dim { color: #b0b0b2; }
.spring { flex: 111 111 111px; }
.field {
  display: flex;
  align-items: center;
  min-width: 0;
  height: 32px;
  padding: 0 7px;
  border: 1px solid #bfbfc0;
  border-radius: 4px;
  background: #fff;
}
.url { flex: 927 1 927px; gap: 12px; }
.search { flex: 377 1 377px; gap: 6px; margin-left: 6px; }
.field input {
  flex: 1;
  min-width: 0;
  padding: 0;
  border: 0;
  outline: 0;
  background: none;
  color: #15141a;
  font: inherit;
}
.field input::placeholder { color: #55555a; opacity: 1; }
.field .address {
  background: linear-gradient(90deg, #15141a 92px, #808084 92px);
  -webkit-background-clip: text;
  background-clip: text;
  color: transparent;
}
.ext {
  width: 16px;
  height: 16px;
  border-radius: 50%;
  font: bold 9px/16px "Open Sans", sans-serif;
  color: #fff;
}
.ext-b { background: #38383d; }
.ext-c { background: #f0a040; }

.bookmarks {
  display: flex;
  align-items: center;
  height: 29px;
  padding: 0 13px;
  background: #f9f9fa;
  border-bottom: 1px solid #ccc;
  color: #3a3a3f;
}
.bookmarks a {
  display: flex;
  align-items: center;
  gap: 4px;
  padding-right: 13px;
  white-space: nowrap;
}
.bookmarks .wide { width: 195px; padding-right: 0; }
.bookmarks .site { gap: 7px; }
.more { margin-left: auto; }

/* Site */
.site-nav {
  display: flex;
  height: 57px;
  background: #333;
  font-size: 16px;
}
.site-nav a { display: flex; align-items: center; padding: 0 17px; }
.site-nav .current { background: #ddce17; }
.site-nav .push { margin-left: auto; }

.page {
  flex: 1;
  padding: 15px 248px 16px 25px;
  color: #c9d1d9;
  font-size: 15px;
  line-height: 27px;
}
.intro { margin: 0 0 17px; }
.games { margin: 0; padding: 0; list-style: none; }
.games li { display: flex; align-items: center; }
.games li::before {
  content: "";
  width: 5px;
  height: 5px;
  margin: 2px 8px 0 -13px;
  border-radius: 50%;
  background: #c9d1d9;
}
.games a { color: #dbb74f; }

/* Map */
.map {
  position: relative;
  width: 500px;
  max-width: 100%;
  margin: 130px 0 0 auto;
  overflow: hidden;
}
.tiles { width: 100%; height: auto; font-family: "Noto Sans", sans-serif; }
.tiles text { text-anchor: middle; paint-order: stroke; stroke: #ffffffb0; stroke-width: 2px; }
.tiles .shields text { font-size: 10px; fill: #7a2a22; stroke: none; }
.tiles .shields .brown { fill: #6a4a1a; }
.towns { font-size: 11px; fill: #333; }
.tiles .city { font-size: 15px; }
.routes { font-size: 10px; font-style: italic; fill: #9c1c2a; }
.airport { font-size: 10px; font-style: italic; fill: #8461c4; }

.pin {
  position: absolute;
  width: 25px;
  height: 41px;
  margin: -41px 0 0 -12px;
  padding: 0;
  border: 0;
  background: none;
  filter: drop-shadow(4px 1px 2px #0006);
}
.pin-narodowy { left: 45%; top: 47%; }
.pin-orlik { left: 43.4%; top: 65%; }

.zoom {
  position: absolute;
  top: 10px;
  left: 10px;
  border: 2px solid #0003;
  border-radius: 4px;
  background-clip: padding-box;
}
.zoom button {
  display: block;
  width: 30px;
  height: 30px;
  padding: 0;
  border: 0;
  background: #fff;
  color: #000;
  font: bold 22px/30px "Liberation Sans", sans-serif;
}
.zoom button:first-child { border-bottom: 1px solid #ccc; }
.attribution {
  position: absolute;
  right: 0;
  bottom: 0;
  padding: 0 5px;
  background: #fffc;
  color: #333;
  font: 12px/17px "Liberation Sans", sans-serif;
  white-space: nowrap;
}
.attribution svg { display: inline-block; }
.attribution a { color: #0078a8; }
```
